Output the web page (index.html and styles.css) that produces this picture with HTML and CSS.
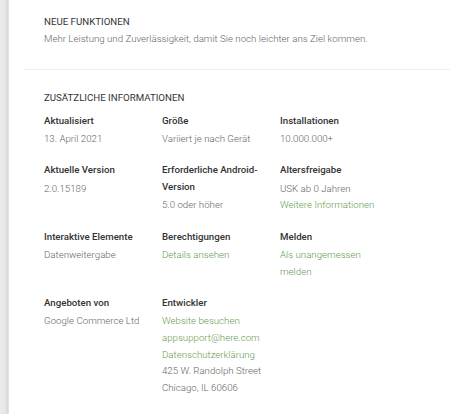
FILE: index.html
```html
<!DOCTYPE html>
<html lang="de">
<head>
<meta charset="utf-8">
<link rel="stylesheet" href="styles.css">
</head>
<body>
<div class="page">
  <div class="edge"></div>
  <main class="card">
    <section class="news">
      <h2 class="title">Neue Funktionen</h2>
      <p class="text">Mehr Leistung und Zuverlässigkeit, damit Sie noch leichter ans Ziel kommen.</p>
    </section>
    <hr class="divider">
    <section class="info">
      <h2 class="title">Zusätzliche Informationen</h2>
      <div class="grid">
        <div class="item"><div class="label">Aktualisiert</div><div class="value">13. April 2021</div></div>
        <div class="item"><div class="label">Größe</div><div class="value">Variiert je nach Gerät</div></div>
        <div class="item"><div class="label">Installationen</div><div class="value">10.000.000+</div></div>

        <div class="item"><div class="label">Aktuelle Version</div><div class="value">2.0.15189</div></div>
        <div class="item"><div class="label">Erforderliche Android-Version</div><div class="value">5.0 oder höher</div></div>
        <div class="item"><div class="label">Altersfreigabe</div><div class="value">USK ab 0 Jahren</div><a class="link">Weitere Informationen</a></div>

        <div class="item"><div class="label">Interaktive Elemente</div><div class="value">Datenweitergabe</div></div>
        <div class="item"><div class="label">Berechtigungen</div><a class="link">Details ansehen</a></div>
        <div class="item"><div class="label">Melden</div><a class="link">Als unangemessen melden</a></div>

        <div class="item"><div class="label">Angeboten von</div><div class="value">Google Commerce Ltd</div></div>
        <div class="item"><div class="label">Entwickler</div><a class="link">Website besuchen</a><a class="link">appsupport@here.com</a><a class="link">Datenschutzerklärung</a><div class="value">425 W. Randolph Street<br>Chicago, IL 60606</div></div>
      </div>
    </section>
  </main>
</div>
</body>
</html>
```

FILE: styles.css
```css
html, body {
  margin: 0;
  padding: 0;
  background: #ffffff;
}
body {
  font-family: Roboto, "Liberation Sans", sans-serif;
  font-size: 9.7px;
  line-height: 16.75px;
  color: #666666;
}
.page {
  display: flex;
  min-height: 414px;
}
.edge {
  width: 9px;
  flex: none;
  background: linear-gradient(to right, #ececec 0%, #e6e6e6 60%, #d6d6d6 90%, #f2f2f2 100%);
}
.card {
  flex: 1;
  display: flex;
  flex-direction: column;
}
.news {
  padding: 14px 0 0 35px;
}
.title {
  margin: 0;
  font-size: 9.7px;
  font-weight: 400;
  line-height: 16.75px;
  color: #333333;
  text-transform: uppercase;
}
.text {
  margin: 0;
  font-weight: 300;
}
.divider {
  margin: 21px 0 0 15px;
  border: 0;
  border-top: 1px solid #eeeeee;
  height: 0;
}
.info {
  padding: 20px 0 0 35px;
}
.info .title {
  margin-bottom: 6.5px;
}
.grid {
  display: grid;
  grid-template-columns: 118px 118px 118px;
  row-gap: 14.5px;
}
.item {
  display: flex;
  flex-direction: column;
  padding-right: 10px;
}
.label {
  font-weight: 500;
  color: #333333;
  margin-bottom: 1.5px;
}
.value {
  font-weight: 300;
}
.link {
  font-weight: 300;
  color: #679a50;
  text-decoration: none;
}
```
